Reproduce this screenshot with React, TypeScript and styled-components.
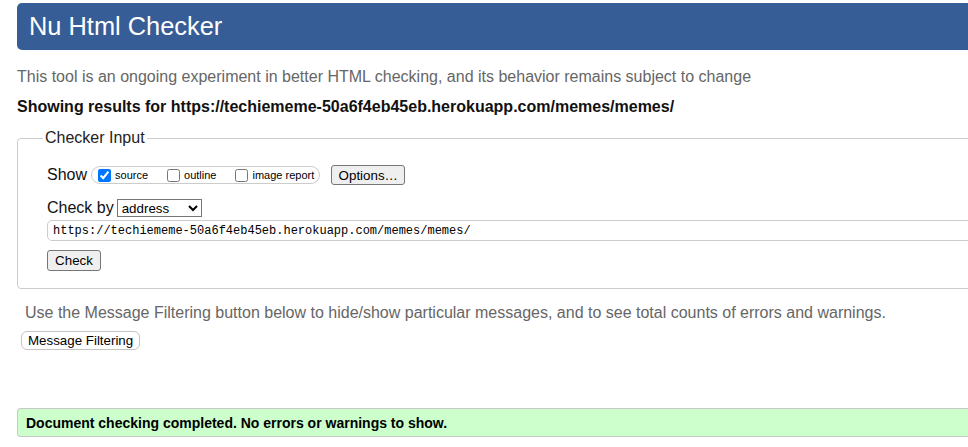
import styled, { createGlobalStyle } from "styled-components";

const GlobalStyle = createGlobalStyle`
  html, body {
    margin: 0;
    padding: 0;
    background: #fff;
    overflow: hidden;
  }
  body {
    font-family: "Liberation Sans", Arial, sans-serif;
    color: #000;
  }
`;

const Page = styled.main`
  width: 1120px;
  padding: 3px 0 0 17px;
`;

const Header = styled.h1`
  margin: 0;
  height: 47px;
  display: flex;
  align-items: center;
  padding-left: 12px;
  background: #365d95;
  color: #fff;
  border-radius: 5px;
  font-size: 25.4px;
  font-weight: normal;
`;

const Intro = styled.p`
  margin: 18px 0 0;
  font-size: 16px;
  line-height: 18px;
  color: #666;
`;

const Results = styled.p`
  margin: 12px 0 0;
  font-size: 16px;
  line-height: 18px;
  font-weight: bold;
  color: #111;
`;

const Fieldset = styled.fieldset`
  margin: 13px 0 0;
  padding: 0 0 17px 29px;
  border: 1px solid #ccc;
  border-radius: 4px;
  min-width: 0;
`;

const Legend = styled.legend`
  margin-left: -4px;
  padding: 0 2px;
  font-size: 16px;
  line-height: 18px;
  color: #222;
`;

const Row = styled.div<{ $top: number; $h: number }>`
  display: flex;
  align-items: center;
  margin-top: ${(p) => p.$top}px;
  height: ${(p) => p.$h}px;
`;

const Label = styled.span<{ $gap: number }>`
  font-size: 16px;
  line-height: 18px;
  margin-right: ${(p) => p.$gap}px;
  color: #111;
`;

const Pill = styled.div`
  display: flex;
  align-items: center;
  height: 16px;
  padding: 0 5px 0 6px;
  border: 1px solid #ccc;
  border-radius: 9px;
`;

const Option = styled.label`
  display: flex;
  align-items: center;
  font-size: 11px;
  margin-right: 19px;
  &:last-child {
    margin-right: 0;
  }
  input {
    margin: 0 4px 0 0;
    width: 13px;
    height: 13px;
  }
`;

const Button = styled.button<{ $light?: boolean }>`
  font-family: "Liberation Sans", Arial, sans-serif;
  font-size: 13.33px;
  white-space: nowrap;
  height: ${(p) => (p.$light ? 19 : 20)}px;
  padding: 0 6px;
  color: #000;
  background: ${(p) => (p.$light ? "#fff" : "#efefef")};
  border: 1px solid ${(p) => (p.$light ? "#c4c4c4" : "#767676")};
  border-radius: ${(p) => (p.$light ? 6 : 3)}px;
`;

const OptionsButton = styled(Button)`
  margin-left: 11px;
  width: 74px;
`;

const Select = styled.select`
  font-family: "Liberation Sans", Arial, sans-serif;
  font-size: 13.33px;
  width: 85px;
  height: 18px;
  padding: 0;
  border: 1px solid #767676;
  border-radius: 0;
  background: #fff;
`;

const UrlInput = styled.input`
  display: block;
  box-sizing: border-box;
  margin-top: 3px;
  width: 1040px;
  height: 21px;
  padding: 0 5px;
  border: 1px solid #ccc;
  border-radius: 5px;
  font-family: "Liberation Mono", "DejaVu Sans Mono", monospace;
  font-size: 12px;
  color: #000;
  outline: none;
`;

const CheckButton = styled(Button)`
  display: block;
  margin-top: 9px;
  width: 54px;
  height: 21px;
`;

const Hint = styled.p`
  margin: 15px 0 0 8px;
  font-size: 16px;
  line-height: 18px;
  color: #666;
`;

const FilterButton = styled(Button)`
  display: block;
  margin: 9px 0 0 4px;
`;

const Success = styled.div`
  margin-top: 58px;
  height: 27px;
  display: flex;
  align-items: center;
  padding-left: 8px;
  background: #ccffcc;
  border: 1px solid #c8c8c8;
  border-right: none;
  border-radius: 4px 0 0 4px;
  font-size: 14px;
  font-weight: bold;
`;

const url = "https://techiememe-50a6f4eb45eb.herokuapp.com/memes/memes/";

export default function App() {
  return (
    <Page>
      <GlobalStyle />
      <Header>Nu Html Checker</Header>
      <Intro>
        This tool is an ongoing experiment in better HTML checking, and its
        behavior remains subject to change
      </Intro>
      <Results>Showing results for {url}</Results>
      <Fieldset>
        <Legend>Checker Input</Legend>
        <Row $top={18} $h={20}>
          <Label $gap={4}>Show</Label>
          <Pill>
            <Option>
              <input type="checkbox" defaultChecked />
              source
            </Option>
            <Option>
              <input type="checkbox" />
              outline
            </Option>
            <Option>
              <input type="checkbox" />
              image report
            </Option>
          </Pill>
          <OptionsButton>Options…</OptionsButton>
        </Row>
        <Row $top={14} $h={18}>
          <Label $gap={3}>Check by</Label>
          <Select defaultValue="address">
            <option value="address">address</option>
            <option value="file">file upload</option>
            <option value="text">text input</option>
          </Select>
        </Row>
        <UrlInput type="url" defaultValue={url} />
        <CheckButton>Check</CheckButton>
      </Fieldset>
      <Hint>
        Use the Message Filtering button below to hide/show particular messages,
        and to see total counts of errors and warnings.
      </Hint>
      <FilterButton $light>Message Filtering</FilterButton>
      <Success>Document checking completed. No errors or warnings to show.</Success>
    </Page>
  );
}
